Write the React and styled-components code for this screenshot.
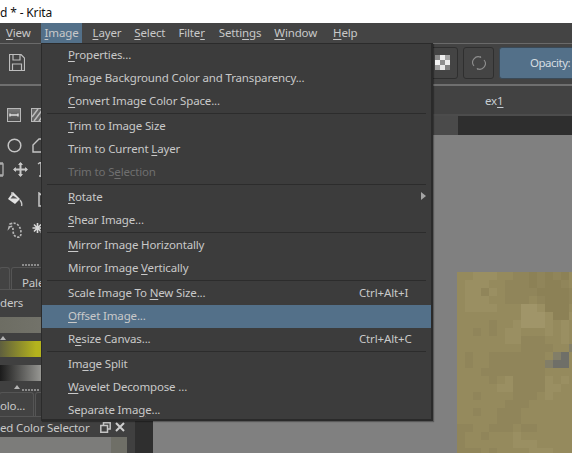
import React from "react";
import styled, { createGlobalStyle } from "styled-components";

const Global = createGlobalStyle`
  html, body { margin: 0; padding: 0; width: 572px; height: 453px; overflow: hidden; background: #808080; }
  * { box-sizing: border-box; }
  u { text-underline-offset: 2px; text-decoration-thickness: 1px; }
`;

const Page = styled.div`
  position: relative;
  width: 572px;
  height: 453px;
  overflow: hidden;
  display: flex;
  flex-direction: column;
  font-family: "Noto Sans", "Open Sans", sans-serif;
  font-size: 11.5px;
  letter-spacing: -0.15px;
  color: #c9c9c9;
`;
const TitleBar = styled.div`
  height: 23px;
  flex: none;
  background: #fff;
  color: #111;
  font-size: 12px;
  line-height: 25px;
  white-space: nowrap;
`;
const MenuBar = styled.div`
  height: 20px;
  flex: none;
  background: #444;
  display: flex;
  padding-left: 2px;
`;
const MenuTitle = styled.div`
  height: 20px;
  padding: 0 4px;
  margin-right: ${p => p.$gap ?? 6}px;
  line-height: 20px;
  white-space: nowrap;
  background: ${p => (p.$active ? "#537089" : "transparent")};
`;
const Toolbar = styled.div`
  height: 43px;
  flex: none;
  background: #434343;
  border-top: 1px solid #6a6a6a;
  border-bottom: 2px solid #6f6f6f;
  display: flex;
  align-items: center;
  overflow: hidden;
  padding-left: 9px;
`;
const ToolButtons = styled.div`
  display: flex;
  gap: 5px;
  margin-left: 401px;
  height: 32px;
  margin-top: -3px;
`;
const ToolButton = styled.div`
  flex: none;
  width: ${p => p.$w}px;
  height: 32px;
  border-radius: 3px;
  border: 1px solid ${p => (p.$blue ? "#3a4a58" : "#2f2f2f")};
  background: ${p => (p.$blue ? "#537089" : "#444")};
  color: #d6dde2;
  display: flex;
  align-items: center;
  justify-content: ${p => (p.$blue ? "flex-start" : "center")};
  padding-left: ${p => (p.$blue ? 30 : 0)}px;
  letter-spacing: ${p => (p.$blue ? "-0.5px" : "inherit")};
  white-space: nowrap;
`;
const Workspace = styled.div`
  flex: 1;
  min-height: 0;
  display: flex;
`;
const LeftDock = styled.div`
  width: 135px;
  flex: none;
  background: #404040;
  display: flex;
  flex-direction: column;
  overflow: hidden;
`;
const ToolRows = styled.div`
  height: 172px;
  flex: none;
  padding-top: 21px;
  display: flex;
  flex-direction: column;
`;
const ToolRow = styled.div`
  height: ${p => p.$h}px;
  flex: none;
  display: flex;
  align-items: center;
  gap: ${p => p.$gap ?? 10}px;
  padding-left: ${p => p.$pad ?? 7}px;
`;
const Dots = styled.div`
  height: 2px;
  width: 18px;
  margin: ${p => p.$m};
  flex: none;
  background: repeating-linear-gradient(90deg, #8c8c8c 0 2px, transparent 2px 3px);
`;
const DockTabs = styled.div`
  display: flex;
  height: ${p => p.$h ?? 23}px;
  flex: none;
  margin-top: ${p => p.$top ?? 0}px;
  border-bottom: 1px solid #555;
`;
const DockTab = styled.div`
  width: ${p => p.$w}px;
  flex: none;
  margin-left: ${p => p.$left ?? 0}px;
  padding-left: ${p => p.$pad ?? 0}px;
  line-height: ${p => p.$line ?? 30}px;
  border: 1px solid #555;
  border-top-left-radius: 3px;
  border-top-right-radius: 3px;
  border-bottom: none;
  background: ${p => (p.$active ? "#434343" : "#3d3d3d")};
  white-space: nowrap;
  overflow: hidden;
`;
const DockLabel = styled.div`
  height: ${p => p.$h}px;
  flex: none;
  display: flex;
  align-items: center;
  justify-content: space-between;
  padding: 0 10px ${p => p.$under ?? 0}px 0;
  white-space: nowrap;
`;
const DockIcons = styled.span`
  display: flex;
  align-items: center;
  gap: 4px;
`;
const Slider = styled.div`
  height: 16px;
  flex: none;
  margin-top: ${p => p.$top ?? 0}px;
  background: ${p => p.$bg};
`;
const Notch = styled.div`
  width: 0;
  height: 0;
  flex: none;
  margin-left: ${p => p.$left}px;
  margin-top: ${p => p.$top}px;
  border: 3px solid transparent;
  border-top: none;
  border-bottom: 4px solid #b5b5b5;
`;
const SelectorPatch = styled.div`
  height: 16px;
  width: 127px;
  flex: none;
  background: linear-gradient(90deg, #7c7c7a 0 111px, #6f6f67 111px);
`;
const Strip = styled.div`
  width: 18px;
  flex: none;
  background: #2f2f2f;
`;
const Main = styled.div`
  flex: 1;
  min-width: 0;
  display: flex;
  flex-direction: column;
`;
const TabBar = styled.div`
  height: 30px;
  flex: none;
  background: #424242;
  border-bottom: 2px solid #4c4c4c;
  padding-left: 332px;
  line-height: 30px;
  color: #c6ccd2;
`;
const Ruler = styled.div`
  height: 19px;
  flex: none;
  background: #2e2e2e;
  border-left: 305px solid #4a4a4a;
`;
const Canvas = styled.div`
  flex: 1;
  min-height: 0;
  background: #808080;
  padding: 137px 0 0 304px;
  overflow: hidden;
`;
const Menu = styled.div`
  position: absolute;
  left: 41px;
  top: 43px;
  width: 392px;
  height: 378px;
  background: #3c3c3c;
  border: 1px solid #2b2b2b;
  border-right: 2px solid #2a2a2a;
  border-bottom: 2px solid #2a2a2a;
  box-shadow: 1px 1px 1px rgba(0, 0, 0, 0.3);
`;
const Item = styled.div`
  height: 23px;
  display: flex;
  align-items: center;
  justify-content: space-between;
  padding: 0 8px 3px 26px;
  white-space: nowrap;
  color: ${p => (p.$disabled ? "#6f6f6f" : "#c9c9c9")};
  background: ${p => (p.$active ? "#537089" : "transparent")};
`;
const Shortcut = styled.span`
  width: 64px;
`;
const Separator = styled.div`
  height: 1px;
  margin: 0 5px 1px 5px;
  background: #2c2c2c;
`;
const Arrow = styled.span`
  width: 0;
  height: 0;
  margin-right: -3px;
  border-left: 5px solid #a5a5a5;
  border-top: 4px solid transparent;
  border-bottom: 4px solid transparent;
`;

const ic = { fill: "none", stroke: "#bdbdbd", strokeWidth: 1.2 };

const SaveIcon = () => (
  <svg width="16" height="17" viewBox="0 0 16 17" style={{ flex: "none", marginTop: -3 }}>
    <path d="M.5.5H12L15.5 4V16.5H.5Z M4 .5V6H11V.5 M3.5 16.5V10H12.5V16.5" {...ic} />
  </svg>
);
const LinkIcon = () => (
  <svg width="14" height="14" viewBox="0 0 14 14" style={{ flex: "none" }}>
    <defs>
      <linearGradient id="lk" x1="0" y1="0" x2="0" y2="1">
        <stop offset="0" stopColor="#7a7a7a" />
        <stop offset="1" stopColor="#4a4a4a" />
      </linearGradient>
    </defs>
    <rect x=".5" y=".5" width="13" height="13" fill="url(#lk)" stroke="#b8b8b8" />
    <path d="M3 7H11M3 5.5V8.5M11 5.5V8.5" stroke="#ddd" strokeWidth="1.4" fill="none" />
  </svg>
);
const HatchIcon = () => (
  <svg width="15" height="14" viewBox="0 0 15 14" style={{ flex: "none" }}>
    <rect x=".5" y=".5" width="14" height="13" fill="#666" stroke="#b8b8b8" />
    <path d="M1 9L7 1M3 13L12 1M8 13L14 5" stroke="#bbb" strokeWidth="1.5" />
  </svg>
);
const CircleIcon = () => (
  <svg width="15" height="15" viewBox="0 0 15 15" style={{ flex: "none" }}>
    <circle cx="7.5" cy="7.5" r="6.3" fill="none" stroke="#c4c4c4" strokeWidth="1.5" />
  </svg>
);
const PolyIcon = () => (
  <svg width="15" height="15" viewBox="0 0 15 15" style={{ flex: "none" }}>
    <path d="M1 14V7L7 1H14V14Z" fill="none" stroke="#c4c4c4" strokeWidth="1.4" />
  </svg>
);
const MoveIcon = () => (
  <svg width="15" height="15" viewBox="0 0 15 15" style={{ flex: "none" }}>
    <path d="M7.5 1V14M1 7.5H14" stroke="#c8c8c8" strokeWidth="2" />
    <path d="M7.5 0L10 3H5ZM7.5 15L10 12H5ZM0 7.5L3 5V10ZM15 7.5L12 5V10Z" fill="#c8c8c8" />
  </svg>
);
const SideGlyph = () => (
  <svg width="4" height="15" viewBox="0 0 4 15" style={{ flex: "none" }}>
    <path d="M0 2H3V13H0M0 1H3M0 14H3" fill="none" stroke="#aaa" strokeWidth="1.4" />
  </svg>
);
const SkewGlyph = () => (
  <svg width="8" height="15" viewBox="0 0 8 15" style={{ flex: "none" }}>
    <path d="M1 2L4 0V15M2 14H6" fill="none" stroke="#c4c4c4" strokeWidth="1.5" />
  </svg>
);
const FillIcon = () => (
  <svg width="16" height="16" viewBox="0 0 16 16" style={{ flex: "none" }}>
    <path d="M6 1L13 8L8 13L1 8Z" fill="#e2e2e2" />
    <path d="M3.5 7.5L6 4.5L10.5 7.5Z" fill="#555" />
    <path d="M5 1V5M13 9Q15.5 12 14.5 15" stroke="#c8c8c8" strokeWidth="1.4" fill="none" />
  </svg>
);
const FrameIcon = () => (
  <svg width="10" height="15" viewBox="0 0 10 15" style={{ flex: "none" }}>
    <path d="M1 1L9 8V14H1Z" fill="none" stroke="#c8c8c8" strokeWidth="1.5" />
  </svg>
);
const LassoIcon = () => (
  <svg width="15" height="16" viewBox="0 0 15 16" style={{ flex: "none" }}>
    <path d="M3 2Q8 0 11 3T14 11T10 15T6 8T2 6Z" fill="none" stroke="#b5b5b5" strokeWidth="1.7" strokeDasharray="2.2 1.4" />
  </svg>
);
const WandIcon = () => (
  <svg width="16" height="15" viewBox="0 0 16 15" style={{ flex: "none" }}>
    <path d="M5.5 0V10M0.5 5H10.5M2 1.5L9 8.5M9 1.5L2 8.5" stroke="#d8d8d8" strokeWidth="1.6" />
    <path d="M8 8L14 14" stroke="#8a8a8a" strokeWidth="2" />
  </svg>
);
const CheckerIcon = () => {
  const cells = ["#8a8a8a", "#eeeeee", "#a5a5a5", "#f2f2f2", "#8f8f8f", "#ececec", "#a0a0a0", "#e8e8e8", "#808080"];
  return (
    <svg width="15" height="15" viewBox="0 0 15 15" shapeRendering="crispEdges">
      {cells.map((f, i) => (
        <rect key={i} x={(i % 3) * 5} y={Math.floor(i / 3) * 5} width="5" height="5" fill={f} />
      ))}
    </svg>
  );
};
const RefreshIcon = () => (
  <svg width="14" height="14" viewBox="0 0 14 14">
    <path d="M2 10A5.6 5.6 0 0 1 9 1.5L8 .3M12 4A5.6 5.6 0 0 1 5 12.5L6 13.7" fill="none" stroke="#8e8e8e" strokeWidth="1.1" />
  </svg>
);
const FloatIcon = () => (
  <svg width="11" height="11" viewBox="0 0 11 11">
    <path d="M3.5 3V.8H10.2V7H8M.8 3.5H7.5V10.2H.8Z" fill="none" stroke="#c4c4c4" strokeWidth="1.5" />
  </svg>
);
const CloseIcon = () => (
  <svg width="10" height="10" viewBox="0 0 10 10">
    <path d="M1 1L9 9M9 1L1 9" stroke="#cfcfcf" strokeWidth="2" />
  </svg>
);

const shades = { a: "#9a8f62", b: "#958a5d", c: "#90855a", d: "#8c8156", e: "#a09569", f: "#6f6f68", g: "#827e68" };
const mosaic = [
  "bbaaabbccdcdcdb", "baaabbcccdcddcb", "baacabccccddddc", "baaabbcccbcdddc",
  "baaaabbbeeadddb", "bbbbbbbbeeeadda", "bbbbcbbaeeeabab", "bbcbcbaabbbabab",
  "bbbbbbaacccbbab", "bbbbbbbbccccbbg", "bcbbcccccccbgfb", "bcbbcccccccgffb",
  "bbbccccccccbbbb", "bbbbcbaccccabab", "bbbbbaaccccaabb", "bbcbbbbcccbabbb",
  "bbbbbbcccbbbbbb", "bbcbbcccbbbbbbb", "bbbbbcccbbbbbbb", "ccbbcccbccbbbbb",
  "cbbcbbbabbbbbbb", "cbbbbbbaaabbbbb", "cccbcbbbbaaabbb",
];
const Mosaic = () => (
  <svg width="120" height="184" viewBox="0 0 120 184" shapeRendering="crispEdges" style={{ display: "block" }}>
    {mosaic.map((row, y) =>
      row.split("").map((c, x) => (
        <rect key={`${x}-${y}`} x={x * 8} y={y * 8} width="8" height="8" fill={shades[c]} />
      ))
    )}
  </svg>
);

const groups = [
  [["<P>roperties..."], ["<I>mage Background Color and Transparency..."], ["<C>onvert Image Color Space..."]],
  [["<T>rim to Image Size"], ["Trim to Current <L>ayer"], ["Trim to S<e>lection", { disabled: true }]],
  [["<R>otate", { arrow: true }], ["<S>hear Image..."]],
  [["<M>irror Image Horizontally"], ["Mirror Image <V>ertically"]],
  [["Scale Image To <N>ew Size...", { sc: "Ctrl+Alt+I" }], ["<O>ffset Image...", { active: true }], ["R<e>size Canvas...", { sc: "Ctrl+Alt+C" }]],
  [["Im<a>ge Split"], ["<W>avelet Decompose ..."], ["Separate Ima<g>e..."]],
];

const Label = ({ text }) => {
  const m = text.match(/^(.*)<(.)>(.*)$/);
  if (!m) return <span>{text}</span>;
  return (
    <span>
      {m[1]}
      <u>{m[2]}</u>
      {m[3]}
    </span>
  );
};

const titles = [
  ["<V>iew", 6], ["<I>mage", 6, true], ["<L>ayer", 5], ["<S>elect", 5], ["Filte<r>", 6], ["Setti<n>gs", 5], ["<W>indow", 8], ["<H>elp", 6],
];

export default function App() {
  return (
    <Page>
      <Global />
      <TitleBar>d * - Krita</TitleBar>
      <MenuBar>
        {titles.map(([t, gap, active]) => (
          <MenuTitle key={t} $gap={gap} $active={active}>
            <Label text={t} />
          </MenuTitle>
        ))}
      </MenuBar>
      <Toolbar>
        <SaveIcon />
        <ToolButtons>
          <ToolButton $w={32}><CheckerIcon /></ToolButton>
          <ToolButton $w={31}><RefreshIcon /></ToolButton>
          <ToolButton $w={100} $blue>Opacity:</ToolButton>
        </ToolButtons>
      </Toolbar>
      <Workspace>
        <LeftDock>
          <ToolRows>
            <ToolRow $h={16}><LinkIcon /><HatchIcon /></ToolRow>
            <ToolRow $h={14} />
            <ToolRow $h={17}><CircleIcon /><PolyIcon /></ToolRow>
            <ToolRow $h={8} />
            <ToolRow $h={15} $pad={0} $gap={9}><SideGlyph /><MoveIcon /><SkewGlyph /></ToolRow>
            <ToolRow $h={14} />
            <ToolRow $h={16} $gap={15}><FillIcon /><FrameIcon /></ToolRow>
            <ToolRow $h={15} />
            <ToolRow $h={16}><LassoIcon /><WandIcon /></ToolRow>
          </ToolRows>
          <Dots $m="6px 0 0 22px" />
          <DockTabs $top={1}>
            <DockTab $w={11} $left={-1} $active />
            <DockTab $w={130} $left={1} $pad={10}><Label text="<P>alette" /></DockTab>
          </DockTabs>
          <DockLabel $h={27} $under={3}>ders</DockLabel>
          <Slider $bg="linear-gradient(90deg, #6d6d63, #74746c 40%, #6f6f72)" />
          <Notch $left={0} $top={3} />
          <Slider $top={1} $bg="linear-gradient(90deg, #5f5f3e, #b4b31d 36px, #b4b31d)" />
          <Slider $top={8} $bg="linear-gradient(90deg, #1b1b1b, #d2d2cc 45%, #dddddd)" />
          <Notch $left={14} $top={4} />
          <Dots $m="0 0 0 22px" />
          <DockTabs $top={1} $h={25}>
            <DockTab $w={35} $left={-1} $line={26} $active>olo...</DockTab>
            <DockTab $w={100} $left={1} />
          </DockTabs>
          <DockLabel $h={20}>
            ed Color Selector
            <DockIcons><FloatIcon /><CloseIcon /></DockIcons>
          </DockLabel>
          <SelectorPatch />
        </LeftDock>
        <Strip />
        <Main>
          <TabBar><Label text="ex<1>" /></TabBar>
          <Ruler />
          <Canvas><Mosaic /></Canvas>
        </Main>
      </Workspace>
      <Menu>
        {groups.map((g, i) => (
          <React.Fragment key={i}>
            {i > 0 && <Separator />}
            {g.map(([t, o = {}]) => (
              <Item key={t} $active={o.active} $disabled={o.disabled}>
                <Label text={t} />
                {o.sc && <Shortcut>{o.sc}</Shortcut>}
                {o.arrow && <Arrow />}
              </Item>
            ))}
          </React.Fragment>
        ))}
      </Menu>
    </Page>
  );
}
